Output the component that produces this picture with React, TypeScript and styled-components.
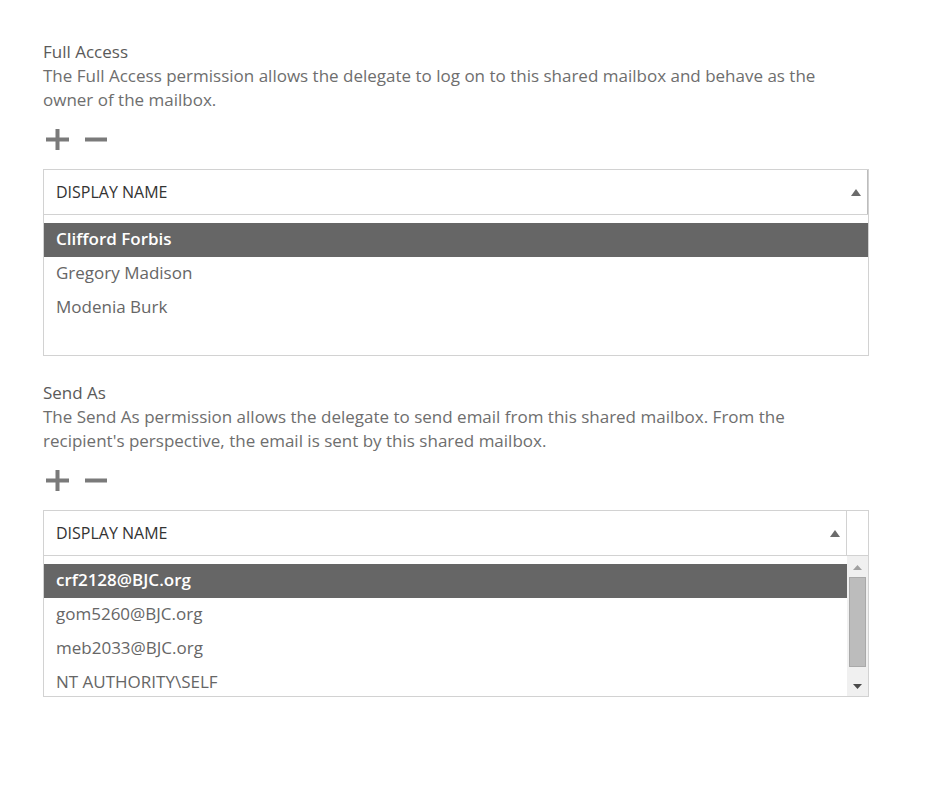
import React from "react";
import styled, { createGlobalStyle } from "styled-components";

const GlobalStyle = createGlobalStyle`
  html, body { margin: 0; padding: 0; background: #ffffff; }
  body { font-family: "Open Sans", "Noto Sans", sans-serif; }
`;

const Page = styled.div`
  width: 826px;
  padding: 40px 0 60px 43px;
  display: flex;
  flex-direction: column;
`;

const Section = styled.section`
  display: flex;
  flex-direction: column;
  & + & { margin-top: 25px; }
`;

const Title = styled.div`
  font-size: 17px;
  line-height: 24px;
  color: #5a5a5a;
`;

const Description = styled.div`
  font-size: 17px;
  line-height: 24px;
  color: #6e6e6e;
`;

const Toolbar = styled.div`
  display: flex;
  align-items: center;
  gap: 16px;
  margin-top: 16px;
  height: 22px;
  padding-left: 3px;
`;

const IconButton = styled.button`
  border: 0;
  background: none;
  padding: 0;
  margin: 0;
  display: flex;
  cursor: pointer;
`;

const Grid = styled.div`
  margin-top: 19px;
  border: 1px solid #d2d2d2;
  display: flex;
  flex-direction: column;
`;

const HeaderRow = styled.div`
  display: flex;
  height: 44px;
  border-bottom: 1px solid #d2d2d2;
`;

const HeaderCell = styled.div<{ $edge?: boolean }>`
  flex: 1;
  display: flex;
  align-items: center;
  justify-content: space-between;
  padding: 0 6px 0 12px;
  font-size: 16px;
  color: #333333;
  border-right: 1px solid ${(p) => (p.$edge ? "#bdbdbd" : "#d2d2d2")};
`;

const HeaderSpacer = styled.div`
  width: 21px;
`;

const Body = styled.div`
  display: flex;
  height: 140px;
  overflow: hidden;
`;

const List = styled.div`
  flex: 1;
  padding-top: 8px;
  display: flex;
  flex-direction: column;
`;

const Row = styled.div<{ $selected?: boolean }>`
  flex: none;
  height: 34px;
  box-sizing: border-box;
  padding: 0 0 3px 12px;
  display: flex;
  align-items: center;
  font-size: 17px;
  background: ${(p) => (p.$selected ? "#666666" : "transparent")};
  color: ${(p) => (p.$selected ? "#ffffff" : "#666666")};
  font-weight: ${(p) => (p.$selected ? 600 : 400)};
`;

const ScrollBar = styled.div`
  width: 21px;
  background: #f0f0f0;
  display: flex;
  flex-direction: column;
  align-items: center;
  padding: 9px 0 7px;
  box-sizing: border-box;
`;

const Thumb = styled.div`
  width: 17px;
  height: 90px;
  margin: 7px 0 auto;
  background: #bcbcbc;
  border: 1px solid #a9a9a9;
  box-sizing: border-box;
`;

const SortArrow = ({ color = "#6b6b6b" }: { color?: string }) => (
  <svg width="10" height="7" viewBox="0 0 10 7">
    <polygon points="5,0 10,7 0,7" fill={color} />
  </svg>
);

const ScrollArrow = ({ up, color }: { up?: boolean; color: string }) => (
  <svg width="9" height="5" viewBox="0 0 9 5">
    {up ? <polygon points="4.5,0 9,5 0,5" fill={color} /> : <polygon points="0,0 9,0 4.5,5" fill={color} />}
  </svg>
);

const PlusIcon = () => (
  <svg width="23" height="21" viewBox="0 0 23 21">
    <rect x="0" y="8.5" width="23" height="4" fill="#7a7a7a" />
    <rect x="9.5" y="0" width="4" height="21" fill="#7a7a7a" />
  </svg>
);

const MinusIcon = () => (
  <svg width="22" height="21" viewBox="0 0 22 21">
    <rect x="0" y="8.5" width="22" height="4" fill="#7a7a7a" />
  </svg>
);

type Perm = {
  title: string;
  description: string;
  rows: string[];
  scroll?: boolean;
};

const perms: Perm[] = [
  {
    title: "Full Access",
    description:
      "The Full Access permission allows the delegate to log on to this shared mailbox and behave as the owner of the mailbox.",
    rows: ["Clifford Forbis", "Gregory Madison", "Modenia Burk"],
  },
  {
    title: "Send As",
    description:
      "The Send As permission allows the delegate to send email from this shared mailbox. From the recipient's perspective, the email is sent by this shared mailbox.",
    rows: ["crf2128@BJC.org", "gom5260@BJC.org", "meb2033@BJC.org", "NT AUTHORITY\\SELF"],
    scroll: true,
  },
];

export default function App() {
  return (
    <>
      <GlobalStyle />
      <Page>
        {perms.map((p) => (
          <Section key={p.title}>
            <Title>{p.title}</Title>
            <Description>{p.description}</Description>
            <Toolbar>
              <IconButton aria-label="Add">
                <PlusIcon />
              </IconButton>
              <IconButton aria-label="Remove">
                <MinusIcon />
              </IconButton>
            </Toolbar>
            <Grid>
              <HeaderRow>
                <HeaderCell $edge={!p.scroll}>
                  <span>DISPLAY NAME</span>
                  <SortArrow />
                </HeaderCell>
                {p.scroll && <HeaderSpacer />}
              </HeaderRow>
              <Body>
                <List>
                  {p.rows.map((r, i) => (
                    <Row key={r} $selected={i === 0}>
                      {r}
                    </Row>
                  ))}
                </List>
                {p.scroll && (
                  <ScrollBar>
                    <ScrollArrow up color="#a0a0a0" />
                    <Thumb />
                    <ScrollArrow color="#4a4a4a" />
                  </ScrollBar>
                )}
              </Body>
            </Grid>
          </Section>
        ))}
      </Page>
    </>
  );
}
